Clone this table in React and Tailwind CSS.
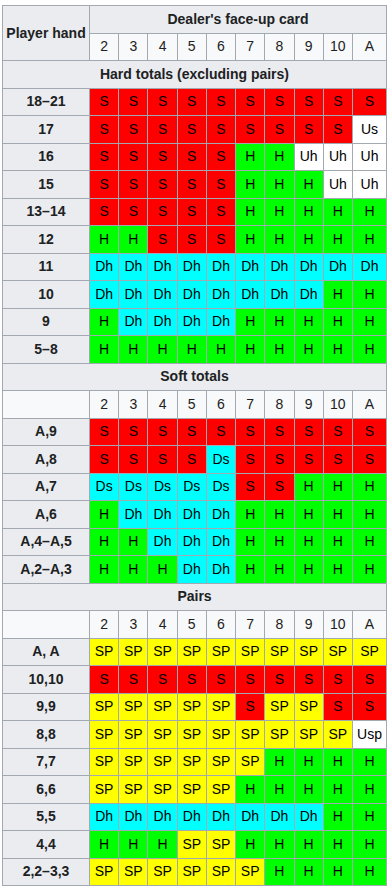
import React from "react";

const COLORS = {
  S: "bg-[#ff0000]",
  H: "bg-[#00ff00]",
  Dh: "bg-[#00ffff]",
  Ds: "bg-[#00ffff]",
  SP: "bg-[#ffff00]",
  Us: "bg-white",
  Uh: "bg-white",
  Usp: "bg-white",
};

const dealer = ["2", "3", "4", "5", "6", "7", "8", "9", "10", "A"];

const hard = [
  ["18–21", "S S S S S S S S S S"],
  ["17", "S S S S S S S S S Us"],
  ["16", "S S S S S H H Uh Uh Uh"],
  ["15", "S S S S S H H H Uh Uh"],
  ["13–14", "S S S S S H H H H H"],
  ["12", "H H S S S H H H H H"],
  ["11", "Dh Dh Dh Dh Dh Dh Dh Dh Dh Dh"],
  ["10", "Dh Dh Dh Dh Dh Dh Dh Dh H H"],
  ["9", "H Dh Dh Dh Dh H H H H H"],
  ["5–8", "H H H H H H H H H H"],
];

const soft = [
  ["A,9", "S S S S S S S S S S"],
  ["A,8", "S S S S Ds S S S S S"],
  ["A,7", "Ds Ds Ds Ds Ds S S H H H"],
  ["A,6", "H Dh Dh Dh Dh H H H H H"],
  ["A,4–A,5", "H H Dh Dh Dh H H H H H"],
  ["A,2–A,3", "H H H Dh Dh H H H H H"],
];

const pairs = [
  ["A, A", "SP SP SP SP SP SP SP SP SP SP"],
  ["10,10", "S S S S S S S S S S"],
  ["9,9", "SP SP SP SP SP S SP SP S S"],
  ["8,8", "SP SP SP SP SP SP SP SP SP Usp"],
  ["7,7", "SP SP SP SP SP SP H H H H"],
  ["6,6", "SP SP SP SP SP H H H H H"],
  ["5,5", "Dh Dh Dh Dh Dh Dh Dh Dh H H"],
  ["4,4", "H H H SP SP H H H H H"],
  ["2,2–3,3", "SP SP SP SP SP SP H H H H"],
];

const cell = "border border-[#a2a9b1] p-0 text-center align-middle h-[27.5px]";

function Caption({ children }) {
  return (
    <tr>
      <th colSpan={11} className={`${cell} bg-[#eaecf0] font-bold`}>
        {children}
      </th>
    </tr>
  );
}

function NumberRow({ blank }) {
  return (
    <tr>
      {blank && <td className={`${cell} bg-[#f8f9fa]`}></td>}
      {dealer.map((d) => (
        <td key={d} className={`${cell} bg-[#f8f9fa] font-normal`}>
          {d}
        </td>
      ))}
    </tr>
  );
}

function Rows({ rows }) {
  return rows.map(([hand, moves]) => (
    <tr key={hand}>
      <th className={`${cell} bg-[#eaecf0] font-bold`}>{hand}</th>
      {moves.split(" ").map((m, i) => (
        <td key={i} className={`${cell} ${COLORS[m]} text-black`}>
          {m}
        </td>
      ))}
    </tr>
  ));
}

export default function App() {
  return (
    <div className="min-h-screen bg-white pt-[5px] pl-[2px] font-['Liberation_Sans',Arial,sans-serif] text-[14px] text-[#202122]">
      <table className="w-[385px] table-fixed border-collapse border border-[#a2a9b1]">
        <colgroup>
          <col className="w-[87px]" />
          <col />
          <col />
          <col />
          <col />
          <col />
          <col />
          <col />
          <col />
          <col />
          <col className="w-[34px]" />
        </colgroup>
        <tbody>
          <tr>
            <th rowSpan={2} className={`${cell} bg-[#eaecf0] font-bold`}>
              Player hand
            </th>
            <th colSpan={10} className={`${cell} bg-[#eaecf0] font-bold`}>
              Dealer's face-up card
            </th>
          </tr>
          <NumberRow />
          <Caption>Hard totals (excluding pairs)</Caption>
          <Rows rows={hard} />
          <Caption>Soft totals</Caption>
          <NumberRow blank />
          <Rows rows={soft} />
          <Caption>Pairs</Caption>
          <NumberRow blank />
          <Rows rows={pairs} />
        </tbody>
      </table>
    </div>
  );
}
